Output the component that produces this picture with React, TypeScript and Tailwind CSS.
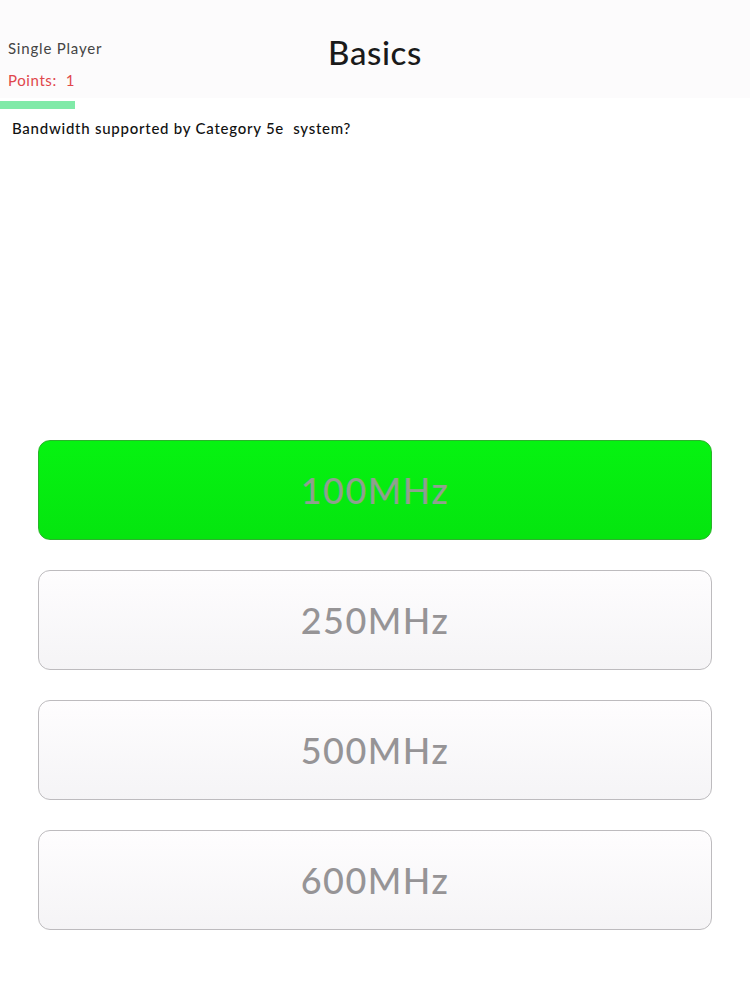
import React from 'react';

const answers = [
  { label: '100MHz', correct: true },
  { label: '250MHz', correct: false },
  { label: '500MHz', correct: false },
  { label: '600MHz', correct: false },
];

const App: React.FC = () => {
  return (
    <div className="min-h-screen w-[750px] bg-white text-black" style={{ fontFamily: 'Lato, "Noto Sans", sans-serif' }}>
      {/* Header */}
      <header className="relative h-[98px] bg-[#fcfbfc]">
        <div className="absolute left-2 top-[37px] text-[15px] tracking-[0.8px] text-[#444]">Single Player</div>
        <div className="absolute left-2 top-[69px] text-[15px] tracking-[0.6px] text-[#e0464b]">Points:&nbsp; 1</div>
        <h1 className="pt-[30px] text-center text-[33px] font-medium leading-[44px] tracking-[0.6px] text-[#1a1a1a]">Basics</h1>
      </header>
      <div className="mt-[3px] h-[8px] w-[75px] bg-[#80eaa8]"></div>

      {/* Question */}
      <p className="mt-[8px] px-3 text-[15px] font-medium tracking-[0.75px] text-[#111]">Bandwidth supported by Category 5e&nbsp; system?</p>

      {/* Answers */}
      <div className="mt-[300px] flex flex-col gap-[30px] pl-[38px] pr-[38px]">
        {answers.map((a) => (
          <button
            key={a.label}
            className={
              a.correct
                ? 'flex h-[100px] w-full items-center justify-center rounded-[12px] border border-[#2cb22c] bg-[linear-gradient(to_bottom,#06f311,#05e50f)] text-[36px] font-medium tracking-[1.5px] text-[#8fa08f]'
                : 'flex h-[100px] w-full items-center justify-center rounded-[12px] border border-[#bdbbbe] bg-[linear-gradient(to_bottom,#fefdfe,#f5f4f6)] text-[36px] font-medium tracking-[1.5px] text-[#969496]'
            }
          >
            {a.label}
          </button>
        ))}
      </div>
    </div>
  );
};

export default App;
